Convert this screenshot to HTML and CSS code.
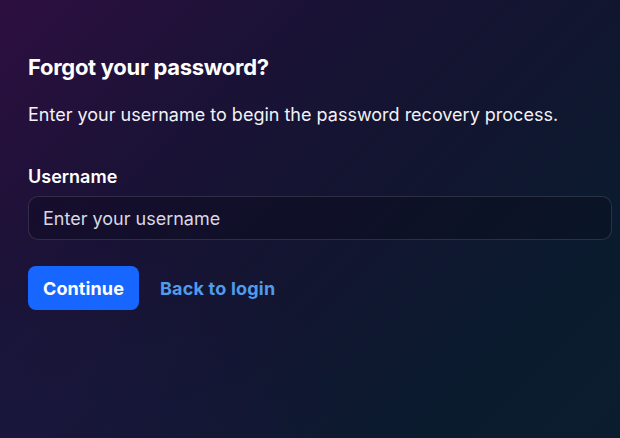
FILE: index.html
```html
<!DOCTYPE html>
<html lang="en">
<head>
<meta charset="utf-8">
<link rel="stylesheet" href="styles.css">
</head>
<body>
<main class="page">
  <h1 class="title">Forgot your password?</h1>
  <p class="lead">Enter your username to begin the password recovery process.</p>
  <form class="form">
    <label class="label" for="username">Username</label>
    <input class="input" id="username" type="text" placeholder="Enter your username">
    <div class="actions">
      <button class="btn" type="button">Continue</button>
      <a class="link" href="#">Back to login</a>
    </div>
  </form>
</main>
</body>
</html>
```
FILE: styles.css
```css
html, body {
  margin: 0;
  height: 100%;
}
body {
  background:
    radial-gradient(ellipse 60% 50% at 0% 100%, rgba(28,26,70,0.5), rgba(28,26,70,0) 100%),
    linear-gradient(135deg, #2d0f40 0%, #1a1236 30%, #121530 55%, #0b1b2e 80%, #0a1d2e 100%);
  font-family: Inter, "Noto Sans", sans-serif;
  color: #ffffff;
}
.page {
  padding: 53px 8px 0 28px;
}
.title {
  margin: 0;
  font-size: 22px;
  font-weight: 700;
  line-height: 28px;
  letter-spacing: -0.3px;
}
.lead {
  margin: 22px 0 0;
  font-size: 18px;
  line-height: 24px;
  color: #f2f2f7;
}
.form {
  display: flex;
  flex-direction: column;
  margin-top: 38px;
}
.label {
  font-size: 18px;
  font-weight: 600;
  line-height: 24px;
}
.input {
  margin-top: 7px;
  height: 44px;
  box-sizing: border-box;
  padding: 0 14px;
  border: 1px solid rgba(255,255,255,0.13);
  border-radius: 10px;
  background: rgba(5,8,20,0.3);
  font-family: inherit;
  font-size: 18px;
  color: #fff;
  outline: none;
}
.input::placeholder {
  color: #d8d8e4;
}
.actions {
  display: flex;
  align-items: center;
  gap: 21px;
  margin-top: 26px;
}
.btn {
  height: 44px;
  padding: 0 15px;
  border: none;
  border-radius: 8px;
  background: #1766ff;
  color: #fff;
  font-family: inherit;
  font-size: 18px;
  font-weight: 700;
  letter-spacing: 0.1px;
}
.link {
  color: #4f9cec;
  font-size: 18px;
  font-weight: 700;
  letter-spacing: 0.2px;
  text-decoration: none;
}
```
